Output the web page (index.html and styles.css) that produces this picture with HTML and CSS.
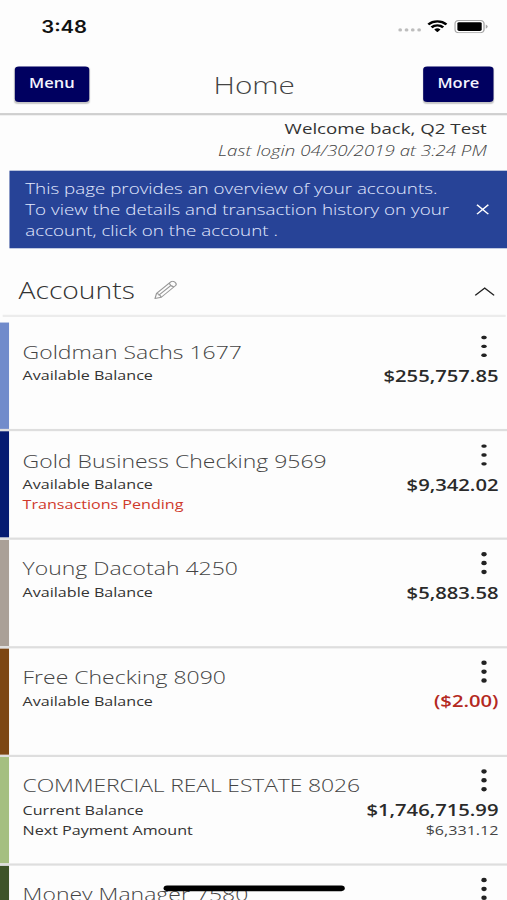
FILE: index.html
```html
<!DOCTYPE html>
<html lang="en">
<head>
<meta charset="utf-8">
<title>Home</title>
<link rel="stylesheet" href="styles.css">
</head>
<body>
<div class="viewport">
<div class="screen">
  <div class="status">
    <span class="time">3:48</span>
    <div class="status-icons">
      <svg class="signal" viewBox="0 0 18 4"><g fill="#bdbdbd"><circle cx="2" cy="2" r="1.4"/><circle cx="6.7" cy="2" r="1.4"/><circle cx="11.3" cy="2" r="1.4"/><circle cx="16" cy="2" r="1.4"/></g></svg>
      <svg class="wifi" viewBox="0 0 15 11"><g fill="none" stroke="#000" stroke-width="2.1"><path d="M.8 4.1a9.5 9.5 0 0 1 13.4 0"/><path d="M3.2 6.7a6 6 0 0 1 8.6 0"/></g><path d="M7.500 11 5.200 8.700a3.200 3.200 0 0 1 4.600 0z"/></svg>
      <svg class="battery" viewBox="0 0 25 12"><rect x=".5" y=".5" width="21.500" height="11" rx="2.800" fill="#fff" stroke="#a6a6a6"/><rect x="2.300" y="2" width="18" height="8" rx="1.300"/><path d="M23.300 4v4q1.400-.6 1.400-2t-1.400-2" fill="#a6a6a6"/></svg>
    </div>
  </div>
  <header class="topbar">
    <button class="btn">Menu</button>
    <h1>Home</h1>
    <button class="btn more">More</button>
  </header>
  <div class="welcome">
    <p class="hello">Welcome back, Q2 Test</p>
    <p class="last">Last login 04/30/2019 at 3:24 PM</p>
  </div>
  <div class="banner">
    <p>This page provides an overview of your accounts.<br>To view the details and transaction history on your<br>account, click on the account .</p>
    <svg viewBox="0 0 10 10"><path d="M.8.800 9.200 9.200M9.200.8.800 9.200" stroke="#fff" stroke-width="1.200"/></svg>
  </div>
  <section>
    <div class="section-head">
      <h2>Accounts</h2>
      <svg class="pencil" viewBox="0 0 17 17"><g fill="none" stroke="#999" stroke-width=".9" stroke-linejoin="round"><path d="M.6 16.400 1.800 11.700 12.300 1.300q1.300-1.200 2.800.1l.6.600q1.300 1.500 0 2.800L5.300 15.200z"/><path d="M1.800 11.700q2.600.7 3.500 3.500M11.200 2.400q.8 3 3.400 3.400M3.300 13.500 12.500 4.500"/></g></svg>
      <svg class="chevron" viewBox="0 0 15 8"><path d="M.5 7.500 7.500 .9 14.500 7.500" fill="none" stroke="#222" stroke-width="1.200"/></svg>
    </div>
    <div class="list">
      <article class="row blue first"><div class="info"><h3>Goldman Sachs 1677</h3><p>Available Balance</p></div><div class="side"><i class="dots"><b></b><b></b><b></b></i><strong>$255,757.85</strong></div></article>
      <article class="row navy"><div class="info"><h3>Gold Business Checking 9569</h3><p>Available Balance</p><p class="pending">Transactions Pending</p></div><div class="side"><i class="dots"><b></b><b></b><b></b></i><strong>$9,342.02</strong></div></article>
      <article class="row taupe"><div class="info"><h3>Young Dacotah 4250</h3><p>Available Balance</p></div><div class="side"><i class="dots"><b></b><b></b><b></b></i><strong>$5,883.58</strong></div></article>
      <article class="row brown"><div class="info"><h3>Free Checking 8090</h3><p>Available Balance</p></div><div class="side"><i class="dots"><b></b><b></b><b></b></i><strong class="neg">($2.00)</strong></div></article>
      <article class="row green"><div class="info"><h3 class="caps">COMMERCIAL REAL ESTATE 8026</h3><p>Current Balance</p><p>Next Payment Amount</p></div><div class="side"><i class="dots"><b></b><b></b><b></b></i><strong>$1,746,715.99</strong><span>$6,331.12</span></div></article>
      <article class="row forest"><div class="info"><h3>Money Manager 7580</h3></div><div class="side"><i class="dots"><b></b><b></b><b></b></i></div></article>
    </div>
  </section>
  <div class="home-indicator"></div>
</div>
</div>
</body>
</html>
```
FILE: styles.css
```css
* { box-sizing: border-box; margin: 0; padding: 0; }
body { background: #fdfdfd; }
.viewport { width: 507px; height: 900px; overflow: hidden; }
/* 375x812 layout stretched to the window */
.screen {
  position: relative;
  width: 375px; height: 812px;
  overflow: hidden;
  transform: scale(1.352, 1.10837);
  transform-origin: 0 0;
  background: #fdfdfd;
  color: #333;
  font-family: "Open Sans", "Noto Sans", sans-serif;
}
svg { display: block; flex: none; }
.status { height: 50px; padding: 0 15px 0 30.500px; display: flex; justify-content: space-between; }
.time { font: 600 15px/20px Inter, sans-serif; color: #111; margin-top: 14.500px; }
.status-icons { display: flex; height: 12px; margin-top: 18px; }
.signal { width: 18px; height: 4px; margin-top: 7px; }
.wifi { width: 15px; height: 11px; margin: 0 5px 0 4.500px; }
.battery { width: 25px; height: 12px; margin-right: -1px; }
.topbar { height: 53.500px; border-bottom: 2px solid #cfcfcf; padding: 9.500px 10px 0 10.600px; display: flex; justify-content: space-between; align-items: flex-start; }
.btn { width: 55.500px; height: 32px; border: 0; border-radius: 3px; background: #000060; color: #f4f4ff; font: 600 12.200px/29px "Open Sans", sans-serif; padding-bottom: 3px; box-shadow: 0 1px 1px rgba(0,0,0,.22); }
.more { width: 52px; }
h1 { font-size: 22px; font-weight: 300; line-height: 32px; color: #444; margin: .6px 3px 0 0; }
.welcome { height: 50.500px; padding: 2.300px 15px 0 0; text-align: right; }
.hello { font-size: 13.830px; line-height: 20px; color: #333; }
.last { font-size: 13.850px; line-height: 20.400px; font-weight: 300; font-style: italic; color: #444; }
.banner { margin-left: 6.500px; height: 70.300px; background: #274397; color: #e3eaff; display: flex; justify-content: space-between; padding: 5.700px 13.400px 0 12.200px; }
.banner p { font-size: 13.900px; font-weight: 300; line-height: 19px; white-space: nowrap; }
.banner svg { width: 10px; height: 10px; margin-top: 24.500px; }
.section-head { height: 61.300px; margin: 0 1.500px; border-bottom: 2px solid #ececec; display: flex; padding: 0 7.200px 0 12.200px; }
h2 { font-size: 20.900px; font-weight: 300; line-height: 30px; margin-top: 22.700px; color: #333; }
.pencil { width: 17px; height: 17px; margin: 29px auto 0 14px; }
.chevron { width: 15px; height: 8px; margin-top: 35.200px; }
.list { padding-top: 3.500px; }
.row { height: 97.900px; border-top: 2px solid #dedede; display: flex; justify-content: space-between; padding: 0 6.300px 0 16.700px; background: linear-gradient(var(--c), var(--c)) 0 0 / 6.700px 100% no-repeat; }
.first { border-top-color: transparent; }
.blue { --c: #718bcb; } .navy { --c: #061b72; } .taupe { --c: #aaa097; }
.brown { --c: #7c4613; } .green { --c: #a5bf80; } .forest { --c: #3e5428; }
.info { flex: 1; min-width: 0; padding-top: 14.600px; }
h3 { font-size: 17px; font-weight: 300; line-height: 23.400px; color: #444; white-space: nowrap; }
.caps { letter-spacing: -.12px; }
.info p { font-size: 11.920px; line-height: 18px; color: #333; white-space: nowrap; }
.info .pending { color: #cf3a2c; }
.side { width: 110px; display: flex; flex-direction: column; align-items: flex-end; padding-top: 11.600px; }
.dots { display: flex; flex-direction: column; gap: 4.200px; margin: 0 8.700px 6.200px 0; }
.dots b { width: 3.800px; height: 3.800px; border-radius: 50%; background: #222; }
strong { font-size: 14.950px; font-weight: 600; line-height: 20px; color: #2a2a2a; }
.side .neg { color: #b4291f; }
.side span { font-size: 11.920px; line-height: 16px; color: #444; }
.home-indicator { position: absolute; left: 121px; top: 799px; width: 133.500px; height: 4.700px; border-radius: 3px; background: #000; }
```
